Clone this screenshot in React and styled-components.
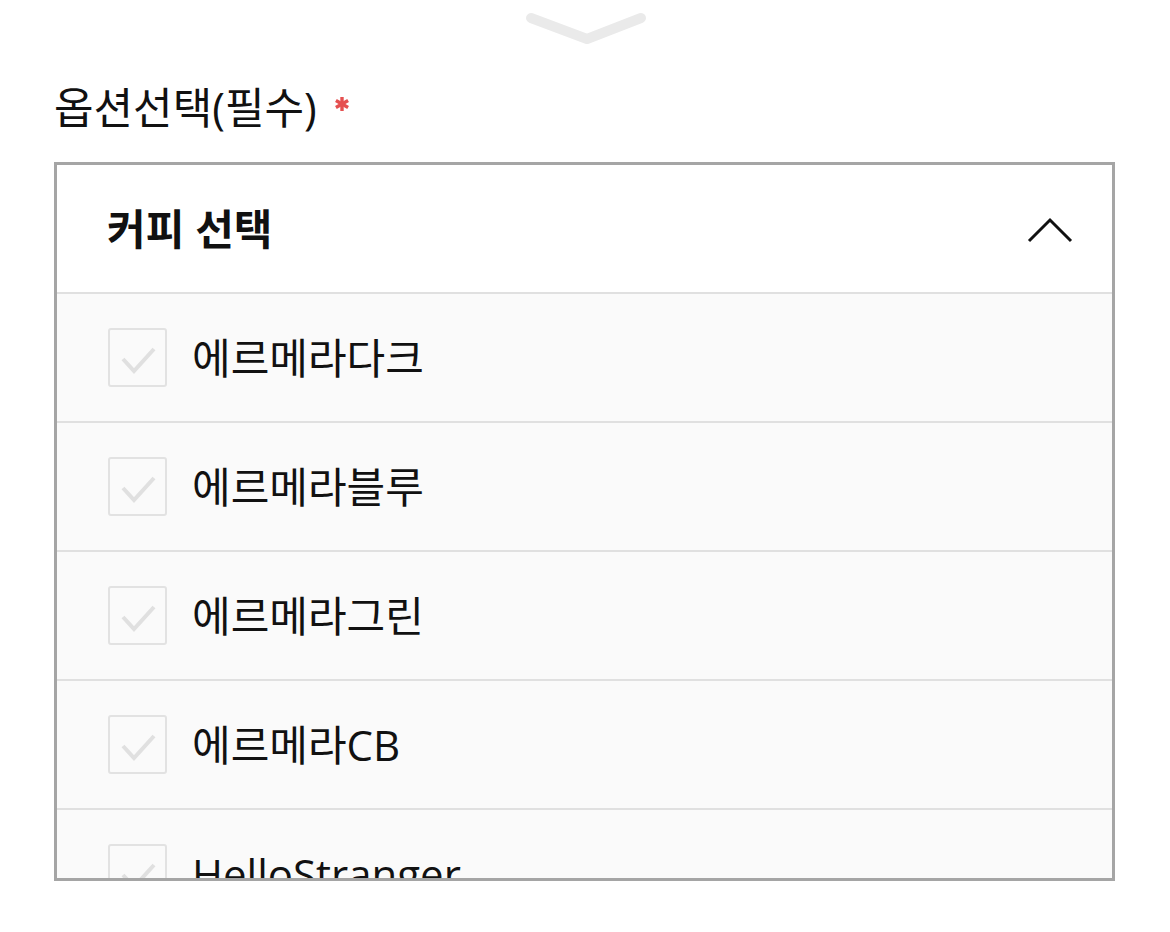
import React, { useState } from 'react'
import styled, { createGlobalStyle } from 'styled-components'

const GlobalStyle = createGlobalStyle`
    html, body {
        margin: 0;
        padding: 0;
        background: #ffffff;
    }
    body {
        font-family: "Open Sans", "Noto Sans CJK KR", sans-serif;
        color: #111111;
    }
`

const options = ['에르메라다크', '에르메라블루', '에르메라그린', '에르메라CB', 'HelloStranger']

const App = () => {
    const [checked, setChecked] = useState([])
    const toggle = (name) => {
        setChecked(checked.includes(name) ? checked.filter(c => c !== name) : [...checked, name])
    }

    return (
        <Page>
            <GlobalStyle />
            <Handle>
                <svg width="130" height="60" viewBox="0 0 130 60">
                    <polyline points="10,18 66,39 120,18" fill="none" stroke="#eaeaea" strokeWidth="10" strokeLinecap="round" strokeLinejoin="round" />
                </svg>
            </Handle>
            <Label>
                옵션선택(필수)
                <Required>
                    <svg width="16" height="16" viewBox="0 0 16 16">
                        <g stroke="#e55050" strokeWidth="3.4" strokeLinecap="butt">
                            <line x1="8" y1="1" x2="8" y2="15" />
                            <line x1="1.9" y1="4.5" x2="14.1" y2="11.5" />
                            <line x1="1.9" y1="11.5" x2="14.1" y2="4.5" />
                        </g>
                    </svg>
                </Required>
            </Label>
            <Box>
                <Header>
                    <span>커피 선택</span>
                    <svg width="46" height="28" viewBox="0 0 46 28">
                        <polyline points="2,25 23,4 44,25" fill="none" stroke="#111" strokeWidth="3" />
                    </svg>
                </Header>
                {options.map(name => (
                    <Row key={name} onClick={() => toggle(name)}>
                        <Check $on={checked.includes(name)}>
                            <svg width="38" height="30" viewBox="0 0 38 30">
                                <polyline points="4,15 15,27 35,5" fill="none" stroke="currentColor" strokeWidth="4" />
                            </svg>
                        </Check>
                        <Name>{name}</Name>
                    </Row>
                ))}
            </Box>
        </Page>
    )
}

export default App

const Page = styled.div`
    width: 1170px;
    height: 932px;
    box-sizing: border-box;
    padding: 0 55px 0 54px;
    overflow: hidden;
`
const Handle = styled.div`
    height: 60px;
    display: flex;
    justify-content: center;
    align-items: flex-start;
    padding-left: 2px;
`
const Label = styled.div`
    margin: 24px 0 30px 0;
    height: 48px;
    line-height: 48px;
    font-size: 43px;
    display: flex;
    align-items: center;
`
const Required = styled.span`
    display: flex;
    margin-left: 17px;
    margin-top: -8px;
`
const Box = styled.div`
    border: 3px solid #a5a5a5;
    height: 719px;
    box-sizing: border-box;
    overflow: hidden;
    background: #fafafa;
`
const Header = styled.div`
    height: 127px;
    background: #ffffff;
    display: flex;
    align-items: center;
    justify-content: space-between;
    padding: 0 39px 0 50px;
    font-size: 42px;
    font-weight: 700;

    span {
        line-height: 1;
    }

    svg {
        margin-top: 2px;
    }
`
const Row = styled.div`
    height: 127px;
    border-top: 2px solid #e0e0e0;
    display: flex;
    align-items: center;
    padding-left: 51px;
    gap: 25px;
    cursor: pointer;
`
const Check = styled.div`
    width: 59px;
    height: 59px;
    box-sizing: border-box;
    border: 2px solid #e2e2e2;
    border-radius: 3px;
    display: flex;
    align-items: center;
    justify-content: center;
    color: ${p => (p.$on ? '#333333' : '#e0e0e0')};
    flex-shrink: 0;

    svg {
        margin-top: 3px;
    }
`
const Name = styled.span`
    font-size: 42px;
    line-height: 1;
    color: #111111;
`
